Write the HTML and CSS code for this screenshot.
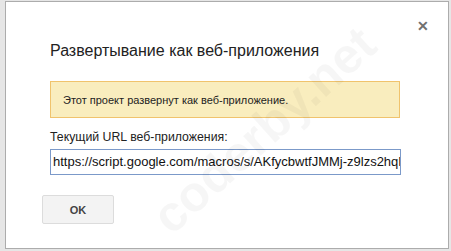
FILE: index.html
```html
<!DOCTYPE html>
<html>
<head>
<meta charset="utf-8">
<link rel="stylesheet" href="styles.css">
</head>
<body>
<div class="dialog">
  <div class="close">&#x2715;</div>
  <h1 class="title">Развертывание как веб-приложения</h1>
  <div class="notice">Этот проект развернут как веб-приложение.</div>
  <div class="label">Текущий URL веб-приложения:</div>
  <div class="input">https://script.google.com/macros/s/AKfycbwtfJMMj-z9lzs2hqN</div>
  <div class="actions"><button class="ok">OK</button></div>
  <div class="watermark">coderby.net</div>
</div>
</body>
</html>
```
FILE: styles.css
```css
html, body { margin: 0; padding: 0; }
body {
  width: 451px; height: 251px; overflow: hidden;
  background: #e6e6e6;
  font-family: "Liberation Sans", Arial, sans-serif;
  padding: 1px 0 0 5px;
  box-sizing: border-box;
}
.dialog {
  position: relative;
  width: 444px; height: 248px;
  box-sizing: border-box;
  background: #fff;
  border: 1px solid #acacac;
  padding: 0 0 0 44px;
  overflow: hidden;
}
.close {
  position: absolute; right: 19px; top: 16px;
  font-size: 14px; font-weight: bold; color: #707070;
}
.title {
  margin: 38px 0 0 0;
  font-size: 16px; font-weight: normal; color: #222;
  line-height: 22px;
}
.notice {
  margin-top: 19px;
  width: 350px; height: 37px; box-sizing: border-box;
  background: #f9edbe; border: 1px solid #f0c36d;
  font-size: 11px; color: #222; padding: 0 12px;
  display: flex; align-items: center;
}
.label {
  margin-top: 11px;
  font-size: 12.3px; color: #222; line-height: 16px;
}
.input {
  margin-top: 4px;
  width: 351px; height: 26px; box-sizing: border-box;
  border: 1px solid #7b99c9;
  font-size: 13px; color: #111; padding: 0 0 0 2px;
  line-height: 24px; white-space: nowrap; overflow: hidden;
}
.actions { margin: 20px 0 0 -8px; }
.ok {
  width: 72px; height: 29px;
  background: #f3f3f3; border: 1px solid #dcdcdc; border-radius: 2px;
  font-family: "Liberation Sans", Arial, sans-serif;
  font-size: 11px; font-weight: bold; color: #444;
}
.watermark {
  position: absolute; left: 258px; top: 128px;
  font-size: 50px; font-weight: bold; color: rgba(0,0,0,0.035);
  transform: translate(-50%, -50%) rotate(-42deg);
  white-space: nowrap; pointer-events: none;
}
```
